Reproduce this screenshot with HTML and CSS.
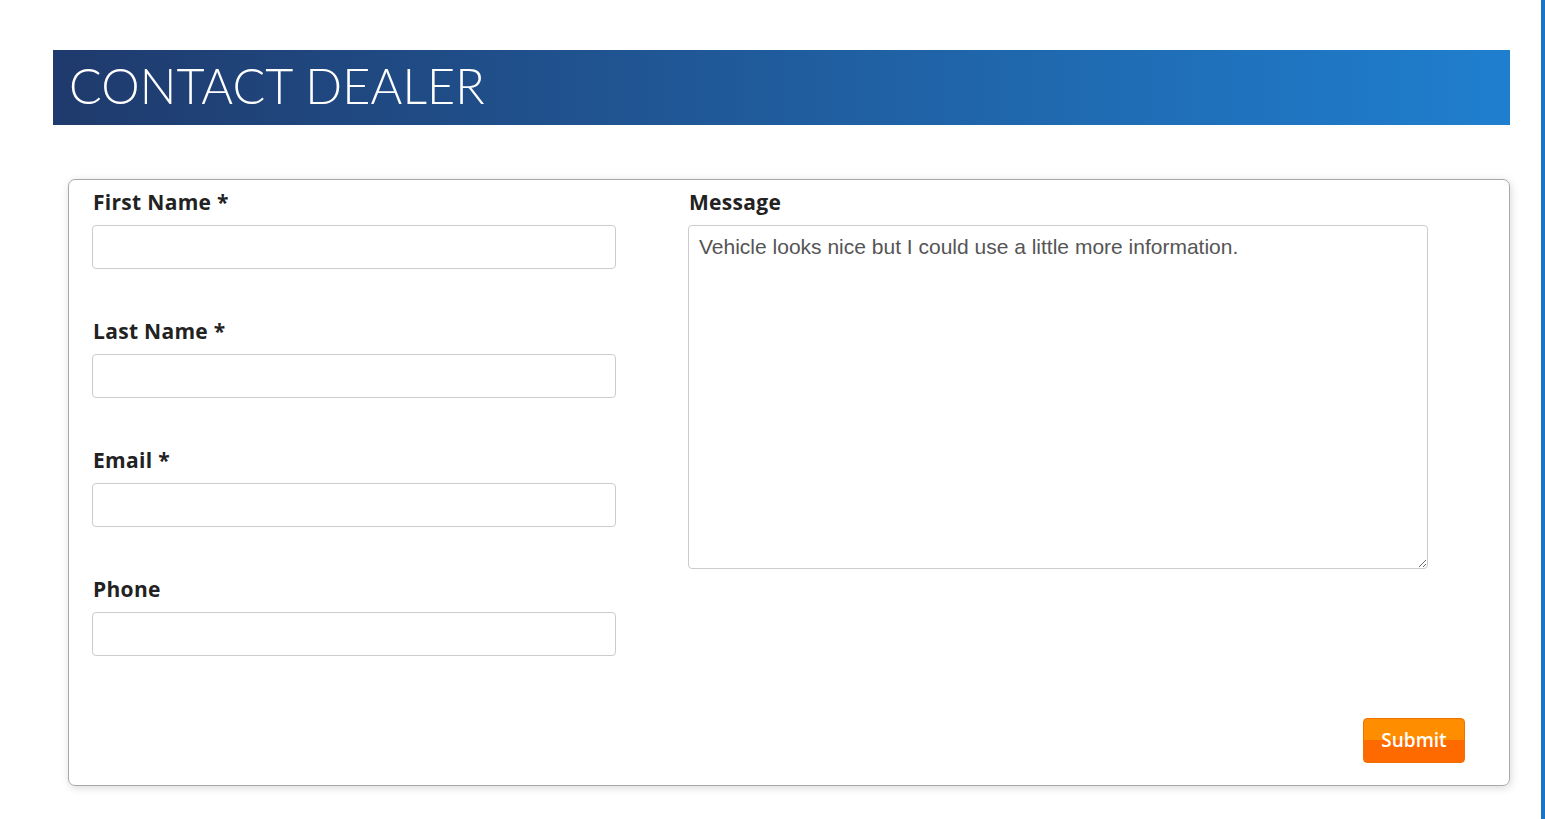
FILE: index.html
```html
<!DOCTYPE html>
<html>
<head>
<meta charset="utf-8">
<link rel="stylesheet" href="styles.css">
</head>
<body>
<div class="page">
  <div class="content">
    <h1 class="title">CONTACT DEALER</h1>
    <form class="card">
      <div class="row">
        <div class="col-left">
          <div class="field">
            <label class="label">First Name *</label>
            <input class="input" type="text">
          </div>
          <div class="field">
            <label class="label">Last Name *</label>
            <input class="input" type="text">
          </div>
          <div class="field">
            <label class="label">Email *</label>
            <input class="input" type="text">
          </div>
          <div class="field">
            <label class="label">Phone</label>
            <input class="input" type="text">
          </div>
        </div>
        <div class="col-right">
          <label class="label">Message</label>
          <textarea class="textarea">Vehicle looks nice but I could use a little more information.</textarea>
        </div>
      </div>
      <div class="actions">
        <button type="button" class="submit">Submit</button>
      </div>
    </form>
  </div>
</div>
</body>
</html>
```
FILE: styles.css
```css
html, body {
  margin: 0;
  padding: 0;
  background: #fff;
}
.page {
  display: flex;
  min-height: 819px;
  border-right: 4px solid #1e74c3;
  box-sizing: border-box;
}
.content {
  padding-top: 50px;
  padding-left: 53px;
  width: 1457px;
}
.title {
  margin: 0;
  height: 75px;
  box-sizing: border-box;
  padding-left: 16px;
  padding-bottom: 6px;
  display: flex;
  align-items: center;
  background: linear-gradient(to right, #1f3a6c 0%, #205593 40%, #1f7fcf 100%);
  color: #fff;
  font-family: "Lato", sans-serif;
  font-weight: 300;
  font-size: 48.5px;
  letter-spacing: 0.1px;
}
.card {
  margin-top: 54px;
  margin-left: 15px;
  width: 1442px;
  height: 607px;
  box-sizing: border-box;
  border: 1px solid #a9a9a9;
  border-radius: 7px;
  box-shadow: 1px 2px 8px rgba(0,0,0,0.15);
  padding: 8px 44px 0 23px;
  display: flex;
  flex-direction: column;
}
.row {
  display: flex;
  gap: 72px;
}
.col-left {
  width: 524px;
  display: flex;
  flex-direction: column;
  gap: 48px;
}
.col-right {
  width: 740px;
  display: flex;
  flex-direction: column;
}
.field {
  display: flex;
  flex-direction: column;
}
.label {
  font-family: "Open Sans", sans-serif;
  font-weight: 700;
  font-size: 21px;
  line-height: 28px;
  letter-spacing: 0.3px;
  color: #222;
  margin-bottom: 9px;
  padding-left: 1px;
}
.input {
  height: 44px;
  box-sizing: border-box;
  border: 1px solid #cccccc;
  border-radius: 4px;
  margin: 0;
  font-family: "Liberation Sans", sans-serif;
  font-size: 18px;
}
.textarea {
  height: 344px;
  box-sizing: border-box;
  border: 1px solid #cccccc;
  border-radius: 4px;
  margin: 0;
  padding: 7px 10px;
  font-family: "Liberation Sans", sans-serif;
  font-size: 21px;
  line-height: 28px;
  color: #555;
  resize: both;
}
.actions {
  margin-top: auto;
  margin-bottom: 22px;
  display: flex;
  justify-content: flex-end;
}
.submit {
  width: 102px;
  height: 45px;
  border: 1px solid #f07000;
  border-radius: 4px;
  background: linear-gradient(to bottom, #ff8d00 0%, #ff8d00 50%, #ff6a00 50%, #ff6a00 100%);
  color: #fff;
  font-family: "Open Sans", sans-serif;
  font-weight: 600;
  font-size: 19px;
  letter-spacing: 0;
  padding: 0 0 2px;
}
```
